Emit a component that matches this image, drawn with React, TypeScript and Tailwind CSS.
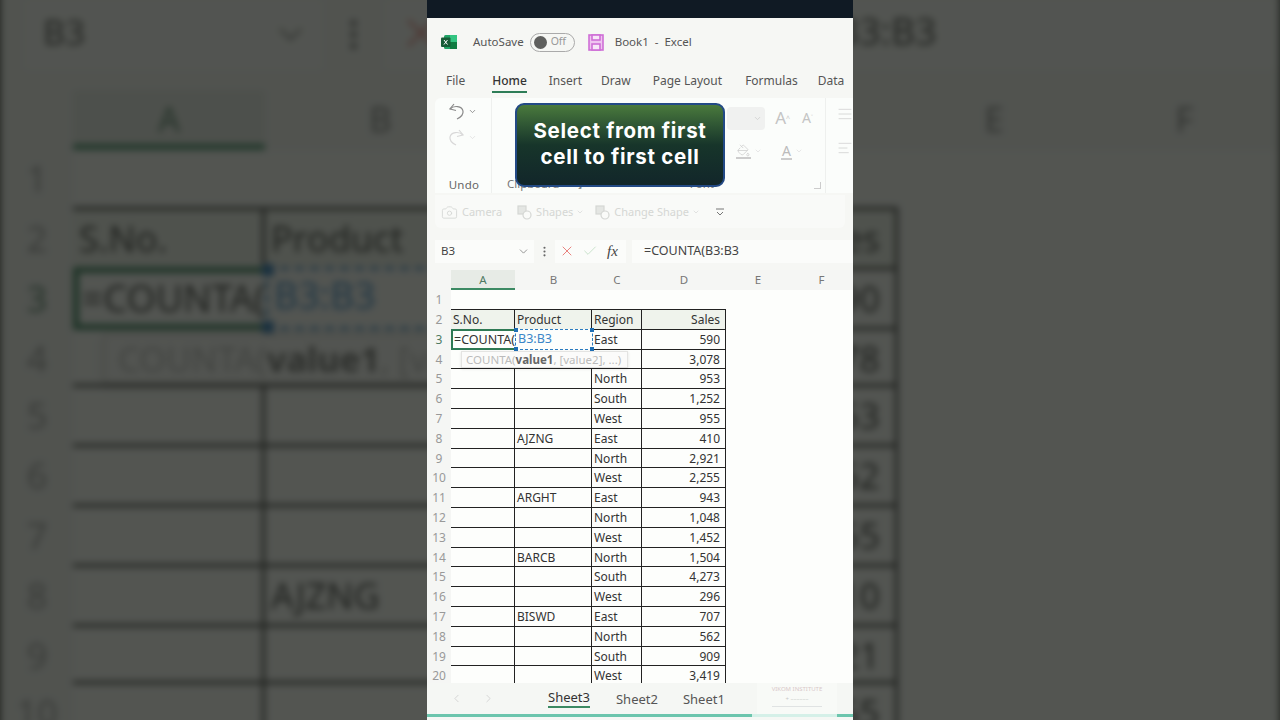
import React from 'react';
import { ChevronDown, ChevronLeft, ChevronRight, Camera, Check, X, AlignJustify, AlignLeft, PaintBucket, EllipsisVertical } from 'lucide-react';

const rows: [string, string, string, string][] = [
  ['3', '', 'East', '590'],
  ['4', '', '', '3,078'],
  ['5', '', 'North', '953'],
  ['6', '', 'South', '1,252'],
  ['7', '', 'West', '955'],
  ['8', 'AJZNG', 'East', '410'],
  ['9', '', 'North', '2,921'],
  ['10', '', 'West', '2,255'],
  ['11', 'ARGHT', 'East', '943'],
  ['12', '', 'North', '1,048'],
  ['13', '', 'West', '1,452'],
  ['14', 'BARCB', 'North', '1,504'],
  ['15', '', 'South', '4,273'],
  ['16', '', 'West', '296'],
  ['17', 'BISWD', 'East', '707'],
  ['18', '', 'North', '562'],
  ['19', '', 'South', '909'],
  ['20', '', 'West', '3,419'],
];

const ShapesIcon = () => (
  <svg width="15" height="15" viewBox="0 0 15 15" fill="none" stroke="#d5d7d4" strokeWidth="1.2">
    <rect x="1" y="1" width="8" height="8" fill="#e4e6e3" />
    <circle cx="10" cy="10" r="4" fill="#fafbf9" />
  </svg>
);

const UndoIcon = ({ className = '' }: { className?: string }) => (
  <svg className={className} width="17" height="18" viewBox="0 0 17 18" fill="none" stroke="currentColor" strokeWidth="1.2">
    <path d="M6 2 L2 7 L8 8.5" />
    <path d="M2 7 C6 3 14 4 15 9 C15.5 12 13 15 9 17" />
  </svg>
);

const TitleBar = () => (
  <div className="flex items-center h-[48px] pl-[14px] shrink-0">
    <svg width="16" height="16" viewBox="0 0 16 16">
      <rect x="3" y="1" width="13" height="14" rx="1.5" fill="#21a366" />
      <rect x="9" y="1" width="7" height="7" fill="#33c481" />
      <rect x="9" y="8" width="7" height="7" fill="#107c41" />
      <rect x="0" y="3.5" width="9.5" height="9.5" rx="1" fill="#185c37" />
      <path d="M3 6 L6.5 10.5 M6.5 6 L3 10.5" stroke="#fff" strokeWidth="1" />
    </svg>
    <span className="ml-[16px] text-[11.5px] text-[#555]">AutoSave</span>
    <div className="ml-[6px] w-[45px] h-[19px] rounded-full border border-[#aaa] flex items-center pl-[3px] gap-[4px]">
      <span className="w-[13px] h-[13px] rounded-full bg-[#5f605e]" />
      <span className="text-[10.5px] text-[#999]">Off</span>
    </div>
    <svg className="ml-[13px]" width="16" height="17" viewBox="0 0 16 17" fill="none" stroke="#cf6fd6" strokeWidth="1.6">
      <rect x="1" y="1" width="14" height="15" fill="#efc4f0" />
      <rect x="4" y="1" width="8" height="5" fill="#f8e6f8" />
      <rect x="4" y="10" width="8" height="6" fill="#f8e6f8" />
    </svg>
    <span className="ml-[11px] text-[11.5px] text-[#555]">Book1&nbsp; -&nbsp; Excel</span>
  </div>
);

const Tabs = () => (
  <div className="flex h-[32px] pl-[19px] text-[12px] text-[#555] shrink-0 whitespace-nowrap overflow-hidden">
    <span className="pt-[6px]">File</span>
    <span className="ml-[27px] pt-[6px] h-[27px] text-[#333] border-b-2 border-[#2e7d57] font-medium">Home</span>
    <span className="ml-[22px] pt-[6px]">Insert</span>
    <span className="ml-[19px] pt-[6px]">Draw</span>
    <span className="ml-[22px] pt-[6px]">Page Layout</span>
    <span className="ml-[23px] pt-[6px]">Formulas</span>
    <span className="ml-[20px] pt-[6px]">Data</span>
  </div>
);

const Ribbon = () => (
  <div className="ml-[8px] h-[95px] shrink-0 flex bg-[#fbfdfb] rounded-tl-md text-[#aaa]">
    <div className="w-[57px] shrink-0 border-r border-[#eef0ee] flex flex-col items-center pt-[4px] pr-[2px]">
      <div className="flex items-center gap-[3px]">
        <UndoIcon className="text-[#8a8a8a]" />
        <ChevronDown size={9} className="text-[#777]" />
      </div>
      <div className="flex items-center gap-[3px] mt-[8px]">
        <UndoIcon className="text-[#d8d8d8] -scale-x-100" />
        <ChevronDown size={9} className="text-[#ddd]" />
      </div>
      <span className="mt-auto ml-[4px] text-[11.5px] tracking-[0.3px] text-[#666]">Undo</span>
    </div>
    <div className="flex-1 flex flex-col pl-[17px]">
      <div className="flex justify-end items-start pt-[9px] pr-[12px] h-[40px]">
        <div className="w-[38px] h-[23px] rounded bg-[#f0f1f0] mr-[10px] flex items-center justify-end pr-[3px]">
          <ChevronDown size={9} className="text-[#ccc]" />
        </div>
        <span className="text-[17px] leading-[22px] text-[#c4c4c4] mr-[12px]">A<sup className="text-[7px]">^</sup></span>
        <span className="text-[14px] leading-[22px] text-[#c4c4c4]">A<sup className="text-[7px]">˅</sup></span>
      </div>
      <div className="flex justify-end items-center pr-[22px] gap-[3px] h-[26px]">
        <PaintBucket size={15} strokeWidth={1.3} className="text-[#c9c9c9] border-b-2 border-[#ccc]" />
        <ChevronDown size={8} className="text-[#ddd] mr-[16px]" />
        <span className="text-[14px] leading-[15px] text-[#bbb] border-b-2 border-[#ccc] px-[1px]">A</span>
        <ChevronDown size={8} className="text-[#ddd]" />
      </div>
      <div className="mt-auto flex items-end pr-[3px] pb-[1px] text-[11.5px] text-[#777]">
        <span className="ml-[-2px]">Clipboard</span>
        <span className="ml-[16px] text-[9px]">↘</span>
        <span className="ml-auto mr-[100px]">Font</span>
        <span className="w-[7px] h-[7px] border-r border-b border-[#ccc] mb-[3px] mr-[1px]" />
      </div>
    </div>
    <div className="w-[28px] shrink-0 border-l border-[#eef0ee] pl-[11px] pt-[8px] text-[#d0d0d0]">
      <AlignJustify size={16} strokeWidth={1.2} />
      <AlignLeft size={16} strokeWidth={1.2} className="mt-[18px]" />
    </div>
  </div>
);

const QuickBar = () => (
  <div className="mx-[8px] h-[33px] mt-[2px] pt-[1px] shrink-0 bg-[#f9faf8] rounded-b-md flex items-center pl-[6px] text-[11px] text-[#d5d7d4]">
    <Camera size={17} strokeWidth={1.2} />
    <span className="ml-[4px]">Camera</span>
    <span className="ml-[15px]"><ShapesIcon /></span>
    <span className="ml-[4px] flex items-center gap-[3px]">Shapes <ChevronDown size={8} /></span>
    <span className="ml-[11px]"><ShapesIcon /></span>
    <span className="ml-[4px] flex items-center gap-[3px]">Change Shape <ChevronDown size={8} /></span>
    <svg className="ml-[16px]" width="8" height="8" viewBox="0 0 8 8" fill="none" stroke="#777" strokeWidth="1">
      <path d="M0 1 H8 M1 4 L4 7 L7 4" />
    </svg>
  </div>
);

const FormulaBar = () => (
  <div className="flex items-center h-[24px] mt-[11px] pl-[8px] shrink-0 text-[11.5px] text-[#444]">
    <div className="w-[99px] h-[23px] bg-[#fbfcfa] flex items-center pl-[6px] pr-[4px] justify-between">
      <span>B3</span>
      <ChevronDown size={13} strokeWidth={1.4} className="text-[#777]" />
    </div>
    <EllipsisVertical size={13} className="mx-[4px] text-[#666]" />
    <div className="w-[71px] h-[23px] bg-[#fbfcfa] flex items-center pl-[4px] gap-[7px]">
      <X size={16} strokeWidth={1.4} className="text-[#e77a75]" />
      <Check size={16} strokeWidth={1.2} className="text-[#bcdcc0]" />
      <span className="ml-[2px] text-[15px] italic text-[#444]" style={{ fontFamily: '"Liberation Serif", serif' }}>fx</span>
    </div>
    <div className="ml-[6px] flex-1 h-[23px] bg-[#fbfcfa] flex items-center pl-[12px] text-[12.5px]">=COUNTA(B3:B3</div>
  </div>
);

const ColHeaders = () => (
  <div className="flex h-[20px] mt-[7px] shrink-0 bg-[#f5f6f4] text-[11.5px] text-[#777] text-center leading-[19px]">
    <span className="w-[24px] shrink-0" />
    <span className="w-[64px] shrink-0 bg-[#e7ebe6] border-b-2 border-[#3c8a63] text-[#4f7a63]">A</span>
    <span className="w-[77px] shrink-0">B</span>
    <span className="w-[50px] shrink-0">C</span>
    <span className="w-[84px] shrink-0">D</span>
    <span className="w-[64px] shrink-0">E</span>
    <span className="w-[63px] shrink-0">F</span>
  </div>
);

const Cell = ({ className = '', children }: { className?: string; children?: React.ReactNode }) => (
  <div className={`shrink-0 h-full border-r border-b border-[#222] px-[2px] whitespace-nowrap ${className}`}>{children}</div>
);

const Handle = ({ className }: { className: string }) => (
  <span className={`absolute w-[4px] h-[4px] bg-[#1f6fb5] ${className}`} />
);

const Grid = () => (
  <div className="flex-1 overflow-hidden bg-[#fdfefc] text-[12px] text-[#333] leading-[19px] relative">
    <div className="flex h-[20px]">
      <span className="w-[24px] text-center text-[#999] bg-[#f5f6f4]">1</span>
    </div>
    <div className="flex h-[19.8px]">
      <span className="w-[24px] shrink-0 text-center text-[#999] bg-[#f5f6f4]">2</span>
      <div className="flex h-full bg-[#eff3ec] border-t border-[#222] -mt-px box-content">
        <Cell className="w-[64px]">S.No.</Cell>
        <Cell className="w-[77px]">Product</Cell>
        <Cell className="w-[50px]">Region</Cell>
        <Cell className="w-[84px] text-right pr-[5px]">Sales</Cell>
      </div>
    </div>
    {rows.map(([n, product, region, sales]) => (
      <div key={n} className="flex h-[19.8px]">
        <span className={`w-[24px] shrink-0 text-center bg-[#f5f6f4] ${n === '3' ? 'text-[#4f7a63] bg-[#e7ebe6]' : 'text-[#999]'}`}>{n}</span>
        <Cell className="w-[64px]" />
        <Cell className="w-[77px]">{product}</Cell>
        <Cell className="w-[50px]">{region}</Cell>
        <Cell className="w-[84px] text-right pr-[5px]">{sales}</Cell>
      </div>
    ))}
    {/* edit cell + reference range sit over the grid */}
    <div className="absolute left-[24px] top-[39px] w-[64px] h-[21px] border-2 border-[#2f7a55] border-r-0 pl-[1px] bg-[#fdfefc] text-[12.5px] leading-[17px] whitespace-nowrap z-10">=COUNTA(</div>
    <div className="absolute left-[88px] top-[39px] w-[78px] h-[21px] border-[1.5px] border-dashed border-[#2b7cc0] bg-[#fdfefc] pl-[2px] text-[12.5px] leading-[17px] text-[#3a86c8] z-10">
      B3:B3
      <Handle className="-left-[2px] -top-[2px]" />
      <Handle className="-right-[2px] -top-[2px]" />
      <Handle className="-left-[2px] -bottom-[2px]" />
      <Handle className="-right-[2px] -bottom-[2px]" />
    </div>
    <div className="absolute left-[34px] top-[61px] w-[167px] h-[17px] bg-[#fbfbfa] border border-[#e4e4e2] shadow-sm pl-[4px] text-[11.5px] leading-[15px] text-[#bbb] whitespace-nowrap z-10">
      COUNTA(<b className="text-[#666]">value1</b>, [value2], ...)
    </div>
  </div>
);

const SheetTabs = () => (
  <div className="h-[34px] shrink-0 flex flex-col bg-[#f5f7f4]">
    <div className="flex-1 flex items-center text-[13px] text-[#555] relative">
      <ChevronLeft size={13} strokeWidth={1.4} className="ml-[23px] text-[#ccc]" />
      <ChevronRight size={13} strokeWidth={1.4} className="ml-[19px] text-[#ccc]" />
      <span className="ml-[53px] mb-[2px] text-[#333] border-b-2 border-[#3c8a63] leading-[18px]">Sheet3</span>
      <span className="ml-[26px] mt-[3px]">Sheet2</span>
      <span className="ml-[25px] mt-[3px]">Sheet1</span>
      {/* watermark */}
      <div className="absolute right-[16px] top-0 w-[80px] h-[31px] bg-[#f8faf7] flex flex-col items-center pt-[2px] text-[6px] leading-[8px] text-[#d9c9c9]">
        <span>VIKOM INSTITUTE</span>
        <span className="mt-[2px] text-[#c9c9c9]">+ ––––––</span>
        <span className="mt-[3px] w-[50px] h-px bg-[#e0e3e3]" />
      </div>
    </div>
    <div className="h-[3px] flex">
      <div className="w-[325px] bg-[#6cc5ad]" />
      <div className="w-[85px] bg-[#d5f0e8]" />
      <div className="flex-1 bg-[#6cc5ad]" />
    </div>
  </div>
);

const Sheet = () => (
  <div className="w-[426px] h-[720px] shrink-0 flex flex-col bg-[#f6f7f4] overflow-hidden" style={{ fontFamily: '"Noto Sans", sans-serif' }}>
    <div className="h-[18px] shrink-0 bg-[#101a24]" />
    <TitleBar />
    <Tabs />
    <Ribbon />
    <QuickBar />
    <FormulaBar />
    <ColHeaders />
    <Grid />
    <SheetTabs />
    <div className="h-[3px] shrink-0 bg-[#f5f7f4]" />
  </div>
);

export default function App() {
  return (
    <div className="relative w-[1280px] h-[720px] overflow-hidden bg-[#4a4c49] flex justify-center">
      {/* blurred zoomed copy behind the video */}
      <div className="absolute inset-0 flex justify-center items-center scale-[3] blur-[1.2px]" aria-hidden="true">
        <Sheet />
      </div>
      <div className="absolute inset-0 bg-[#1a1c18]/75" />
      <div className="relative">
        <Sheet />
        <div className="absolute left-[88px] top-[103px] w-[210px] h-[84px] rounded-[9px] border-2 border-[#234a86] flex items-center justify-center text-center text-white text-[20.5px] leading-[26px] font-bold tracking-[0.7px] pb-[3px] bg-gradient-to-b from-[#4a7a3c] via-[#17352a] to-[#12262a]" style={{ fontFamily: 'Inter, sans-serif' }}>
          Select from first<br />cell to first cell
        </div>
      </div>
    </div>
  );
}
